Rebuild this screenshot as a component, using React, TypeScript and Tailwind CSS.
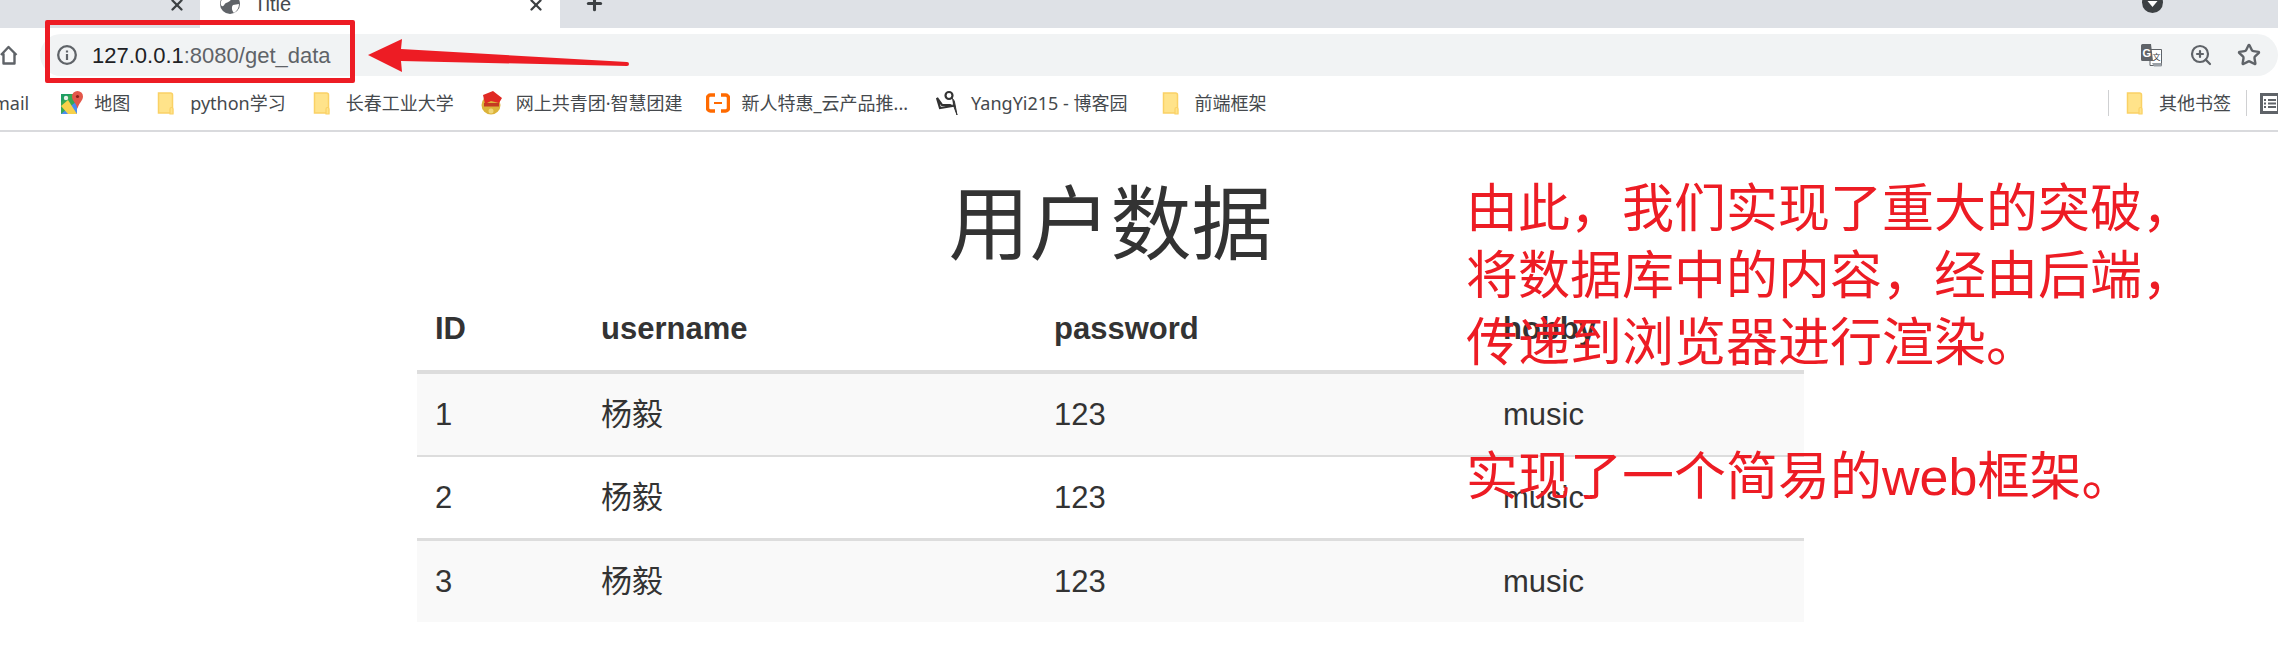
import React from "react";
import { X, Plus, ZoomIn, Star } from "lucide-react";

const cjk = `"Liberation Sans","Noto Sans CJK SC",sans-serif`;
const bar = `"Noto Sans","Noto Sans CJK SC",sans-serif`;

function Folder() {
  return (
    <svg width="18" height="23" viewBox="0 0 18 23" className="shrink-0">
      <path d="M1.500 1h12a2 2 0 0 1 2 2v18h-14z" fill="#ffe38a" stroke="#fad165" strokeWidth="1.500" />
      <path d="M13 22v-5a1.300 1.300 0 0 1 3 0v5z" fill="#ffe38a" stroke="#fad165" strokeWidth="1.200" />
    </svg>
  );
}

function MapsIcon() {
  return (
    <svg width="22" height="24" viewBox="0 0 22 24" className="shrink-0">
      <path d="M0 3h16v20H0z" fill="#35a853" />
      <path d="M0 23 16 10v13z" fill="#4a8cf0" />
      <path d="M0 15 7 9l9 14H7z" fill="#f7d14a" />
      <path d="M0 3h10L0 11z" fill="#1f9d61" />
      <circle cx="5" cy="7" r="2.200" fill="#e8f0e8" />
      <path d="M16.500 0a5.500 5.500 0 0 1 5.500 5.500C22 10 17.500 12 16.500 18 15.500 12 11 10 11 5.500A5.500 5.500 0 0 1 16.500 0z" fill="#e3574a" />
      <circle cx="16.500" cy="5.500" r="1.600" fill="#8a2018" />
    </svg>
  );
}

function Badge() {
  return (
    <svg width="23" height="24" viewBox="0 0 23 24" className="shrink-0">
      <circle cx="11" cy="14" r="9.500" fill="#dcb33a" />
      <path d="M3 4 13 0l9 7-3 5-8-2-6 3z" fill="#e02a24" />
      <rect x="4" y="12" width="15" height="3.500" fill="#c43a22" />
      <circle cx="11" cy="20" r="2.500" fill="#f0d678" />
    </svg>
  );
}

function Ali() {
  return (
    <svg width="24" height="20" viewBox="0 0 24 20" className="shrink-0">
      <path d="M9 2H4.500A3 3 0 0 0 1.500 5v10a3 3 0 0 0 3 3H9M15 2h4.500a3 3 0 0 1 3 3v10a3 3 0 0 1-3 3H15" fill="none" stroke="#ff6a00" strokeWidth="3.500" />
      <path d="M8 10h8" stroke="#ff6a00" strokeWidth="2" />
    </svg>
  );
}

function Blog() {
  return (
    <svg width="23" height="26" viewBox="0 0 23 26" className="shrink-0">
      <circle cx="13" cy="5.500" r="3.500" fill="none" stroke="#333" strokeWidth="2.200" />
      <path d="M16 8c1 1 2 2 2.500 4L21 25 17 14" fill="#333" stroke="#333" strokeWidth="1" />
      <path d="M1 8l3 10 12-2-2-1-8 0z" fill="none" stroke="#333" strokeWidth="2.200" />
    </svg>
  );
}

function Translate() {
  return (
    <svg width="21" height="23" viewBox="0 0 21 23">
      <path d="M9 5.500h11.500v16H9z" fill="#fff" stroke="#5f6368" strokeWidth="1" />
      <path d="M1.500 0h8.500l2 17H1.500A1.500 1.500 0 0 1 0 15.500v-14A1.500 1.500 0 0 1 1.500 0z" fill="#5f6368" />
      <path d="M11 19h9.500v3.500H13z" fill="#9aa0a6" />
      <text x="1.500" y="13" fontSize="11" fontWeight="700" fill="#fff" fontFamily="Liberation Sans">G</text>
      <text x="11.500" y="16" fontSize="8" fill="#3c4043" fontFamily="Noto Sans CJK SC">文</text>
    </svg>
  );
}

function Bm({ icon, label, className }: { icon: React.ReactNode; label: string; className: string }) {
  return (
    <div className={`flex items-center whitespace-nowrap ${className}`}>
      {icon}
      <span>{label}</span>
    </div>
  );
}

const rows = ["1", "2", "3"];

export default function App() {
  return (
    <div className="relative w-[2278px] h-[667px] overflow-hidden bg-white" style={{ fontFamily: cjk }}>
      {/* tab strip */}
      <div className="flex h-[28px] bg-[#dee1e6] overflow-hidden">
        <div className="w-[200px] h-[28px] flex justify-end pr-[14px] rounded-br-[8px] bg-[#dee1e6] text-[#3c4043]">
          <X size={18} strokeWidth={3} className="-mt-[4px]" />
        </div>
        <div className="w-[360px] h-[28px] bg-white flex items-start pl-[20px] pr-[15px] text-[#45494d]">
          <svg width="20" height="20" viewBox="0 0 20 20" className="-mt-[6px] shrink-0">
            <circle cx="10" cy="10" r="10" fill="#5f6368" />
            <path d="M4 3c4-1 7 0 7 2S8 8 6 9 4 13 2 12 0 7 4 3zM13 11l6-1c0 4-2 7-5 9-2-2-3-6-1-8z" fill="#fff" />
          </svg>
          <span className="ml-[14px] -mt-[11px] text-[20px]">Title</span>
          <X size={18} strokeWidth={3} className="ml-auto -mt-[4px] text-[#3c4043]" />
        </div>
        <div className="flex-1 bg-[#dee1e6] pl-[24px] flex justify-between pr-[115px] rounded-bl-[14px]">
          <Plus size={21} strokeWidth={3.500} className="-mt-[7px] text-[#3c4043]" />
          <svg width="21" height="21" viewBox="0 0 21 21" className="-mt-[8px]">
            <circle cx="10.500" cy="10.500" r="10.500" fill="#3c4043" />
            <path d="M5.500 9l5 6 5-6z" fill="#fff" />
          </svg>
        </div>
      </div>

      {/* toolbar */}
      <div className="h-[48px] pt-[6px] flex bg-white">
        <div className="w-[40px] h-[42px] flex items-center text-[#5f6368]">
          <svg width="18" height="20" viewBox="0 0 18 20" fill="none" stroke="#5f6368" strokeWidth="2.400" strokeLinejoin="round">
            <path d="M1 10 8.500 2 16.500 10M3.500 8.500V18.500h11V8.500" />
          </svg>
        </div>
        <div className="flex-1 h-[42px] rounded-[21px] bg-[#f1f3f4] flex items-center pl-[17px]">
          <svg width="20" height="20" viewBox="0 0 20 20" fill="none" stroke="#5f6368">
            <circle cx="10" cy="10" r="8.800" strokeWidth="2.300" />
            <path d="M10 9v6M10 5.500v2" strokeWidth="2.200" />
          </svg>
          <span className="ml-[15px] text-[22px] text-[#202124]">127.0.0.1</span>
          <span className="text-[22px] text-[#5f6368]">:8080/get_data</span>
          <div className="ml-auto mr-[17px] flex items-center">
            <Translate />
            <ZoomIn size={24} strokeWidth={2.200} className="ml-[27px] text-[#5f6368]" />
            <Star size={24} strokeWidth={2.400} className="ml-[24px] text-[#5f6368]" />
          </div>
        </div>
      </div>

      {/* bookmarks */}
      <div
        className="h-[56px] border-b-2 border-[#d9dadd] flex items-center text-[18px] text-[#45494d] overflow-hidden"
        style={{ fontFamily: bar }}
      >
        <span className="-ml-[7px]">mail</span>
        <Bm icon={<MapsIcon />} label="地图" className="ml-[32px] gap-[11px]" />
        <Bm icon={<Folder />} label="python学习" className="ml-[27px] gap-[15px]" />
        <Bm icon={<Folder />} label="长春工业大学" className="ml-[27px] gap-[15px]" />
        <Bm icon={<Badge />} label="网上共青团·智慧团建" className="ml-[26px] gap-[13px]" />
        <Bm icon={<Ali />} label="新人特惠_云产品推..." className="ml-[23px] gap-[12px]" />
        <Bm icon={<Blog />} label="YangYi215 - 博客园" className="ml-[28px] gap-[12px]" />
        <Bm icon={<Folder />} label="前端框架" className="ml-[34px] gap-[15px]" />
        <div className="ml-auto h-[26px] w-px bg-[#cfd0d2]" />
        <Bm icon={<Folder />} label="其他书签" className="ml-[17px] gap-[15px]" />
        <div className="ml-[15px] h-[26px] w-px bg-[#cfd0d2]" />
        <svg className="ml-[13px] -mr-[2px] shrink-0" width="20" height="21" viewBox="0 0 20 21" fill="none" stroke="#5f6368">
          <rect x="1.500" y="1.500" width="17" height="18" strokeWidth="3" />
          <path d="M4 7h2M8 7h8M4 10.500h2M8 10.500h8M4 14h2M8 14h8" strokeWidth="2" />
        </svg>
      </div>

      {/* page */}
      <div className="ml-[417px] w-[1387px] text-[#333333]">
        <h1 className="h-[155px] pt-[45px] text-center text-[81px] leading-[96px] font-normal">用户数据</h1>
        <table className="w-full table-fixed border-separate border-spacing-0 text-[31px]">
          <colgroup>
            <col className="w-[166px]" />
            <col className="w-[453px]" />
            <col className="w-[449px]" />
            <col />
          </colgroup>
          <thead>
            <tr>
              {["ID", "username", "password", "hobby"].map((h) => (
                <th key={h} className="h-[87px] px-[18px] pt-[2px] text-left font-bold border-b-4 border-[#dddddd]">
                  {h}
                </th>
              ))}
            </tr>
          </thead>
          <tbody>
            {rows.map((id, i) => (
              <tr key={id} className={i % 2 === 0 ? "bg-[#f9f9f9]" : "bg-white"}>
                {[id, "杨毅", "123", "music"].map((c, j) => (
                  <td
                    key={j}
                    className={
                      i === 0
                        ? "h-[83px] px-[18px] pt-[2px] border-b-2 border-[#dddddd]"
                        : i === 1
                          ? "h-[84px] px-[18px] pt-[2px] border-b-[3px] border-[#dddddd]"
                          : "h-[81px] px-[18px] pt-[2px]"
                    }
                  >
                    {c}
                  </td>
                ))}
              </tr>
            ))}
          </tbody>
        </table>
      </div>

      {/* annotations */}
      <div className="absolute left-[45px] top-[20px] w-[310px] h-[63px] border-[5px] border-[#ed1c24] rounded-[2px]" />
      <svg className="absolute left-[360px] top-[30px]" width="280" height="50" viewBox="0 0 280 50">
        <path d="M8 25 42 9l-1 10 226 13a2 2 0 0 1 0 4L41 31l1 11z" fill="#ed1c24" />
      </svg>
      <div className="absolute left-[1466px] top-[176px] w-[780px] text-[52px] leading-[67px] text-[#ed1c24]">
        <div>由此，我们实现了重大的突破，</div>
        <div>将数据库中的内容，经由后端，</div>
        <div>传递到浏览器进行渲染。</div>
        <div>&nbsp;</div>
        <div>实现了一个简易的web框架。</div>
      </div>
    </div>
  );
}
